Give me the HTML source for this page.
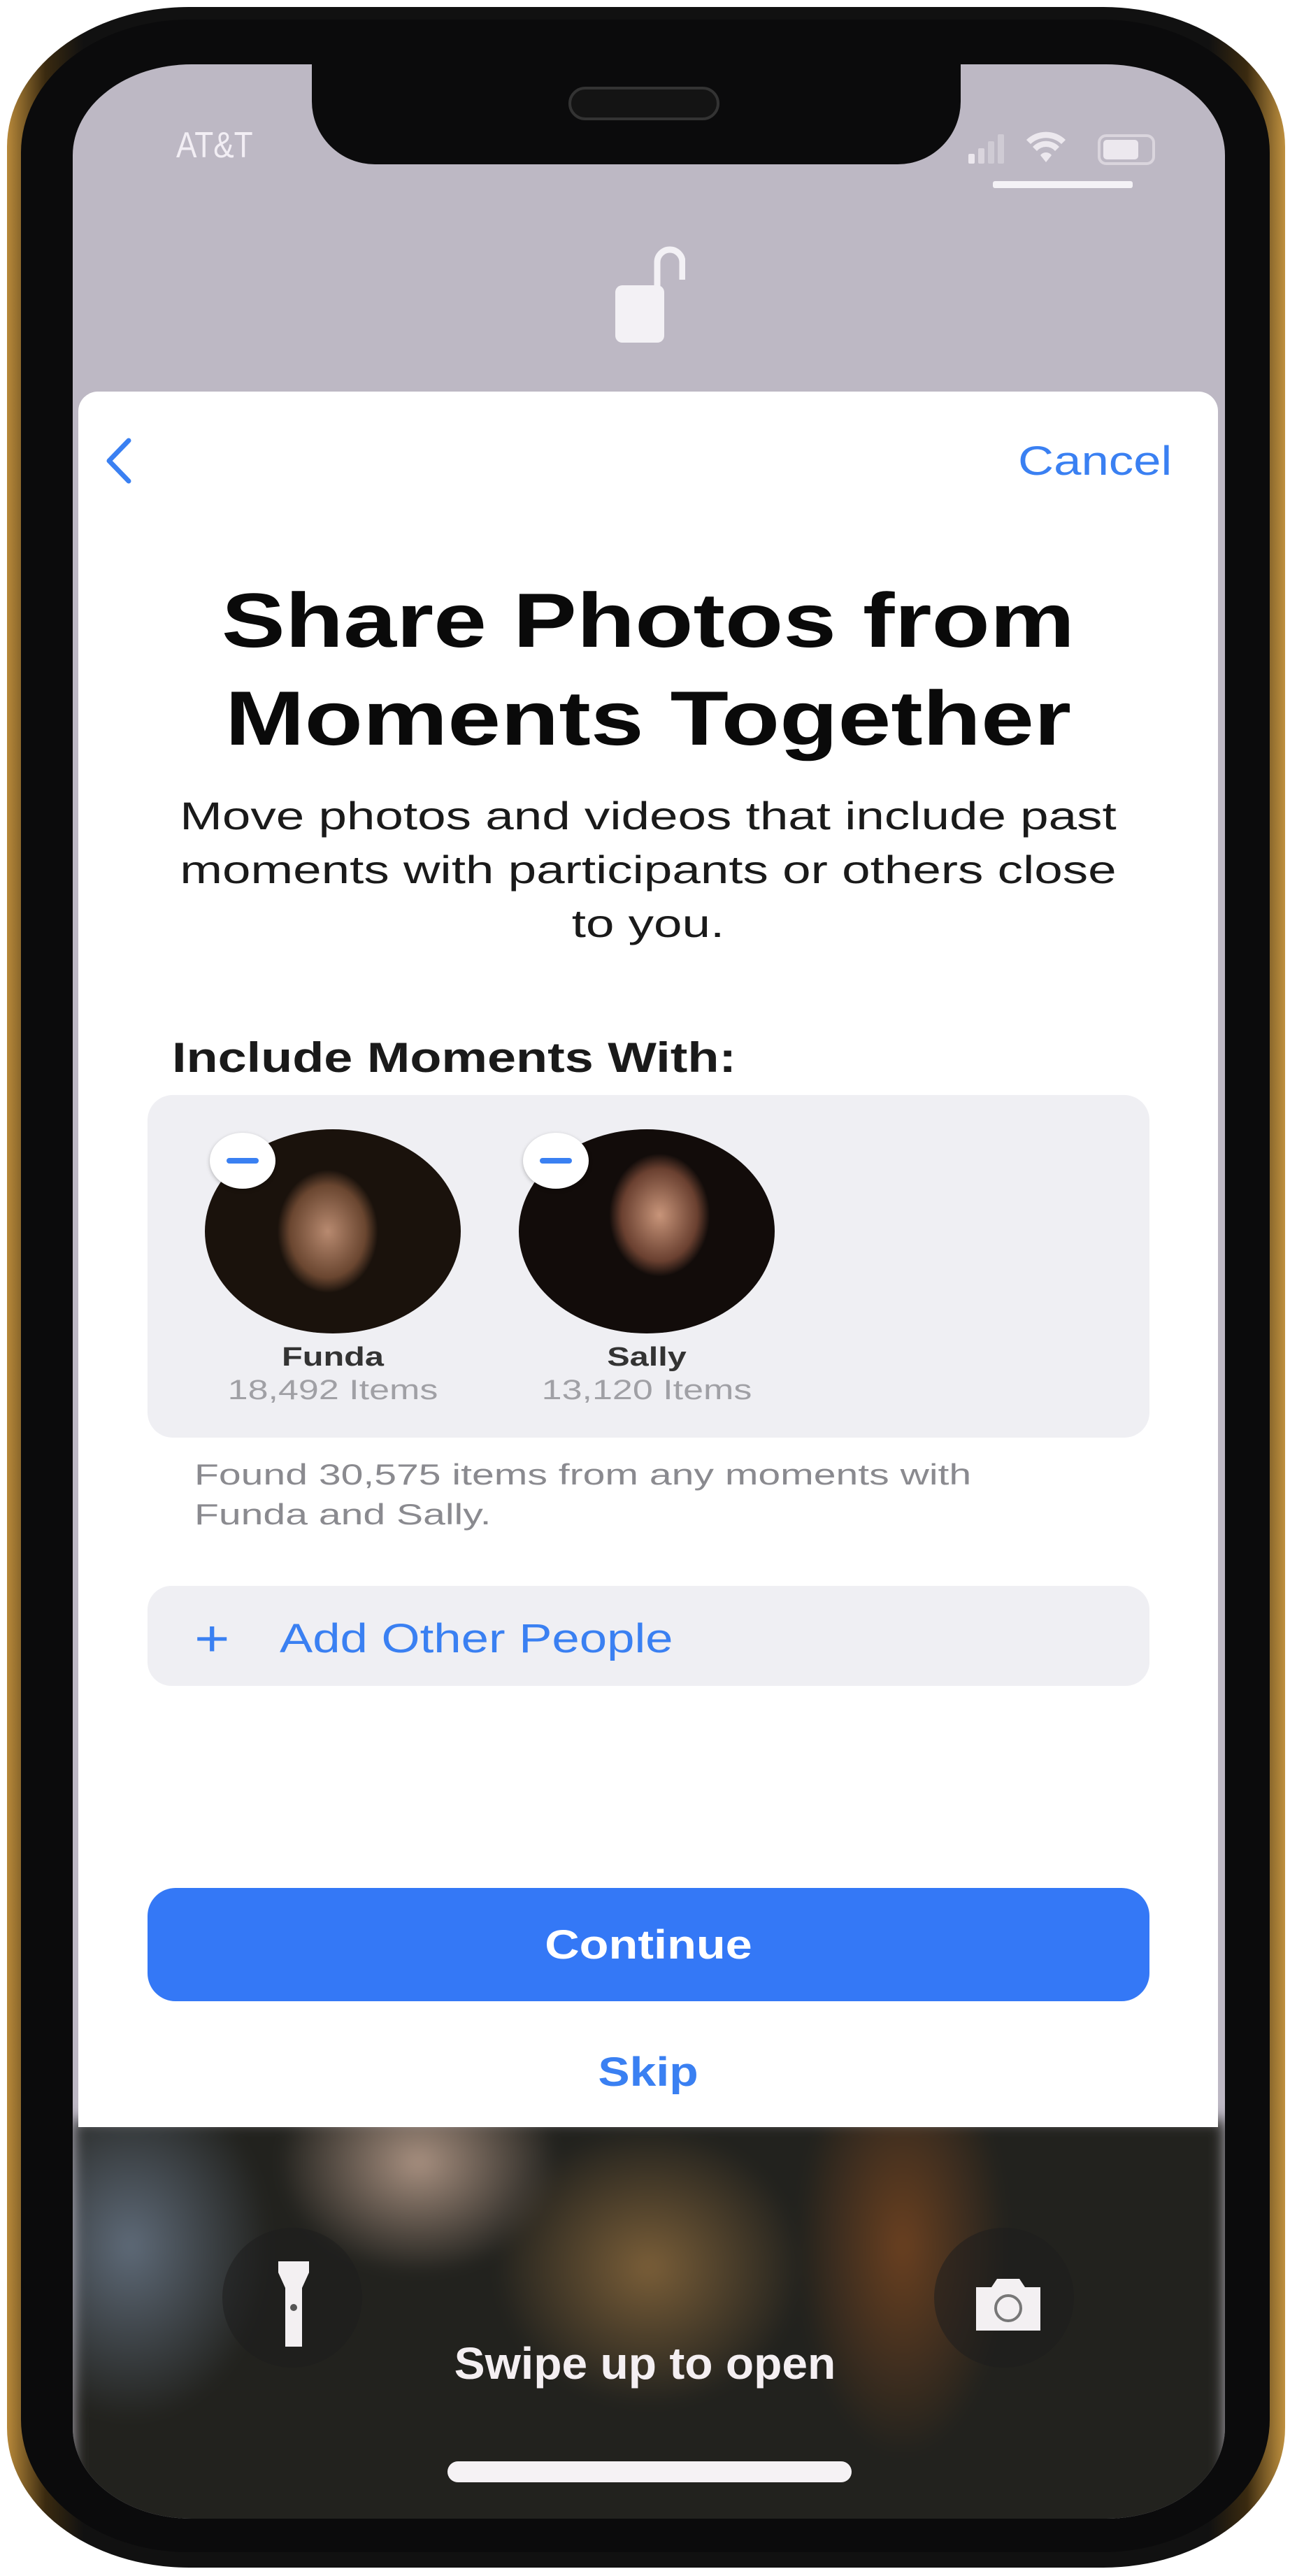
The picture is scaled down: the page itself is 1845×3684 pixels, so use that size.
<!DOCTYPE html>
<html><head><meta charset="utf-8"><style>
*{margin:0;padding:0;box-sizing:border-box}
body{width:1845px;height:3684px;background:#fff;position:relative;overflow:hidden;font-family:"Liberation Sans",sans-serif}
.a{position:absolute}
.c{position:absolute;left:0;width:100%;text-align:center}
</style></head><body>
<div class="a" style="left:10px;top:10px;width:1828px;height:3662px;border-radius:260px/200px;background:linear-gradient(90deg,#b8893a,#3a2a10 3%,#111 6%,#111 94%,#3a2a10 97%,#c0913f);"></div>
<div class="a" style="left:30px;top:28px;width:1786px;height:3622px;border-radius:240px/190px;background:#0b0b0c;"></div>
<div class="a" style="left:104px;top:92px;width:1648px;height:3510px;border-radius:170px/130px;overflow:hidden;background:#bdb8c4;">
  <div class="a" style="left:0;top:2940px;width:100%;height:600px;background:radial-gradient(ellipse 200px 160px at 30% 10%,#a89080,transparent),radial-gradient(ellipse 220px 200px at 50% 35%,#7a5e38,transparent),radial-gradient(ellipse 150px 300px at 72% 30%,#6a4020,transparent),radial-gradient(ellipse 200px 250px at 5% 30%,#5e6a78,transparent),#22221e;filter:blur(10px);"></div>
</div>
<div class="a" style="left:446px;top:60px;width:928px;height:175px;background:#0b0b0c;border-radius:0 0 90px 90px;"></div>
<div class="a" style="left:813px;top:124px;width:216px;height:48px;border-radius:24px;border:4px solid #333;background:#141414;"></div>
<div class="a" style="left:252px;top:178px;font-size:52px;color:#f2eef4;transform:scaleX(.85);transform-origin:left">AT&amp;T</div>
<svg class="a" style="left:1380px;top:180px" width="300" height="60" viewBox="0 0 300 60">
<g fill="#ece8ee"><rect x="5" y="40" width="9" height="14" rx="2"/><rect x="19" y="32" width="9" height="22" rx="2" opacity=".6"/><rect x="33" y="22" width="9" height="32" rx="2" opacity=".4"/><rect x="47" y="12" width="9" height="42" rx="2" opacity=".4"/>
<path d="M88 20a40 40 0 0 1 56 0l-6 6a32 32 0 0 0-44 0z M97 30a26 26 0 0 1 38 0l-6 6a17 17 0 0 0-26 0z M108 42a10 10 0 0 1 16 0l-8 10z"/>
<rect x="192" y="14" width="78" height="40" rx="10" fill="none" stroke="#ece8ee" stroke-width="4" opacity=".6"/><rect x="198" y="20" width="50" height="28" rx="5"/></g></svg>
<div class="a" style="left:1420px;top:259px;width:200px;height:10px;background:#f4f2f6;border-radius:3px"></div>
<svg class="a" style="left:880px;top:330px" width="100" height="170" viewBox="0 0 100 170">
<path d="M60 80V45a18 18 0 0 1 36 0v25" fill="none" stroke="#f3f1f5" stroke-width="9"/>
<rect x="0" y="78" width="70" height="82" rx="10" fill="#f3f1f5"/></svg>
<div class="a" style="left:112px;top:560px;width:1630px;height:2482px;background:#fff;border-radius:28px 28px 0 0;"></div>
<svg class="a" style="left:146px;top:624px" width="50" height="70" viewBox="0 0 50 70"><path d="M38 6L10 35l28 29" fill="none" stroke="#3a80f2" stroke-width="7" stroke-linecap="round" stroke-linejoin="round"/></svg>
<div class="a" style="left:1456px;top:626px;font-size:58px;color:#3a80f2;transform:scaleX(1.22);transform-origin:left">Cancel</div>
<div class="c" style="top:818px;font-size:110px;font-weight:bold;line-height:140px;color:#0a0a0a;left:112px;width:1630px;transform:scaleX(1.24)">Share Photos from<br>Moments Together</div>
<div class="c" style="top:1128px;font-size:56px;line-height:77px;color:#1a1a1a;left:112px;width:1630px;transform:scaleX(1.3)">Move photos and videos that include past<br>moments with participants or others close<br>to you.</div>
<div class="a" style="left:246px;top:1478px;font-size:60px;font-weight:bold;color:#1a1a1a;transform:scaleX(1.23);transform-origin:left">Include Moments With:</div>
<div class="a" style="left:211px;top:1566px;width:1433px;height:490px;border-radius:36px;background:#efeff3;"></div>
<div class="a" style="left:293px;top:1615px;width:366px;height:292px;border-radius:50%;background:radial-gradient(ellipse 90px 110px at 48% 50%,#b88a70,#6a4630 60%,#1a120c 80%);"></div>
<div class="a" style="left:742px;top:1615px;width:366px;height:292px;border-radius:50%;background:radial-gradient(ellipse 90px 110px at 55% 42%,#c8957a,#6a4030 60%,#120c0a 80%);"></div>
<div class="a" style="left:300px;top:1620px;width:94px;height:80px;border-radius:50%;background:#fff;box-shadow:0 2px 6px rgba(0,0,0,.25)"><div class="a" style="left:24px;top:36px;width:46px;height:8px;background:#3a80f2;border-radius:4px"></div></div>
<div class="a" style="left:748px;top:1620px;width:94px;height:80px;border-radius:50%;background:#fff;box-shadow:0 2px 6px rgba(0,0,0,.25)"><div class="a" style="left:24px;top:36px;width:46px;height:8px;background:#3a80f2;border-radius:4px"></div></div>
<div class="a" style="left:276px;top:1920px;width:400px;text-align:center;font-size:38px;font-weight:bold;color:#333;transform:scaleX(1.28)">Funda</div>
<div class="a" style="left:276px;top:1966px;width:400px;text-align:center;font-size:40px;color:#a0a0a5;transform:scaleX(1.3)">18,492 Items</div>
<div class="a" style="left:725px;top:1920px;width:400px;text-align:center;font-size:38px;font-weight:bold;color:#333;transform:scaleX(1.28)">Sally</div>
<div class="a" style="left:725px;top:1966px;width:400px;text-align:center;font-size:40px;color:#a0a0a5;transform:scaleX(1.3)">13,120 Items</div>
<div class="a" style="left:278px;top:2080px;font-size:42px;line-height:57px;color:#8a8a8f;transform:scaleX(1.36);transform-origin:left">Found 30,575 items from any moments with<br>Funda and Sally.</div>
<div class="a" style="left:211px;top:2268px;width:1433px;height:143px;border-radius:34px;background:#efeff3;"></div>
<div class="a" style="left:278px;top:2308px;font-size:72px;line-height:72px;color:#3a80f2;transform:scaleX(1.2);transform-origin:left">+</div>
<div class="a" style="left:400px;top:2310px;font-size:58px;color:#3a80f2;transform:scaleX(1.22);transform-origin:left">Add Other People</div>
<div class="a" style="left:211px;top:2700px;width:1433px;height:162px;border-radius:40px;background:#3478f6;"></div>
<div class="a" style="left:211px;top:2748px;width:1433px;text-align:center;font-size:58px;font-weight:bold;color:#fff;transform:scaleX(1.18)">Continue</div>
<div class="a" style="left:112px;top:2930px;width:1630px;text-align:center;font-size:58px;font-weight:bold;color:#3a80f2;transform:scaleX(1.17)">Skip</div>
<div class="a" style="left:318px;top:3186px;width:200px;height:200px;border-radius:50%;background:rgba(30,30,30,.55)"></div>
<div class="a" style="left:1336px;top:3186px;width:200px;height:200px;border-radius:50%;background:rgba(30,30,30,.55)"></div>
<svg class="a" style="left:390px;top:3230px" width="60" height="130" viewBox="0 0 60 130"><path d="M8 4h44v16l-10 22v84H18V42L8 20z" fill="#f3f0f2"/><circle cx="30" cy="70" r="5" fill="#555"/></svg>
<svg class="a" style="left:1392px;top:3255px" width="100" height="80" viewBox="0 0 100 80"><path d="M4 16h22l8-12h32l8 12h22v62H4z" fill="#f3f0f2"/><circle cx="50" cy="46" r="18" fill="none" stroke="#777" stroke-width="4"/></svg>
<div class="a" style="left:0;top:3343px;width:1845px;text-align:center;font-size:64px;font-weight:bold;color:#f4eff2;transform:scaleX(1.03)">Swipe up to open</div>
<div class="a" style="left:640px;top:3520px;width:578px;height:30px;border-radius:15px;background:#f5f2f4;"></div>
</body></html>
